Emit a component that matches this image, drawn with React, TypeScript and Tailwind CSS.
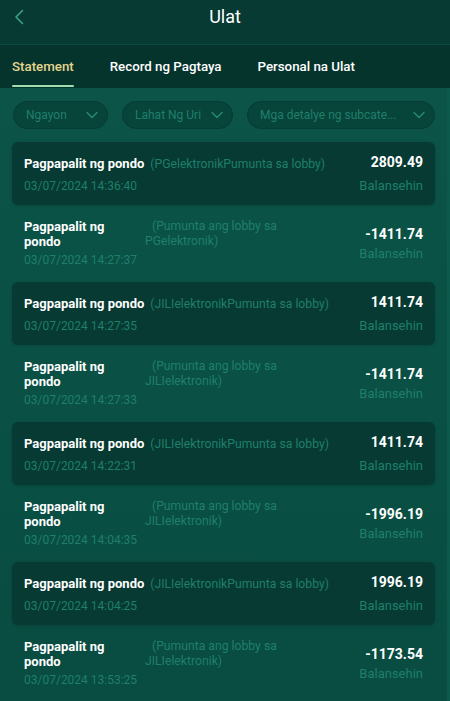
import React from 'react';

type Item = {
  card: boolean;
  desc: string;
  date: string;
  amount: string;
};

const items: Item[] = [
  { card: true, desc: '(PGelektronikPumunta sa lobby)', date: '03/07/2024 14:36:40', amount: '2809.49' },
  { card: false, desc: '(Pumunta ang lobby sa PGelektronik)', date: '03/07/2024 14:27:37', amount: '-1411.74' },
  { card: true, desc: '(JILIelektronikPumunta sa lobby)', date: '03/07/2024 14:27:35', amount: '1411.74' },
  { card: false, desc: '(Pumunta ang lobby sa JILIelektronik)', date: '03/07/2024 14:27:33', amount: '-1411.74' },
  { card: true, desc: '(JILIelektronikPumunta sa lobby)', date: '03/07/2024 14:22:31', amount: '1411.74' },
  { card: false, desc: '(Pumunta ang lobby sa JILIelektronik)', date: '03/07/2024 14:04:35', amount: '-1996.19' },
  { card: true, desc: '(JILIelektronikPumunta sa lobby)', date: '03/07/2024 14:04:25', amount: '1996.19' },
  { card: false, desc: '(Pumunta ang lobby sa JILIelektronik)', date: '03/07/2024 13:53:25', amount: '-1173.54' },
];

function Chevron() {
  return (
    <svg width="12" height="8" viewBox="0 0 12 8" fill="none" className="shrink-0">
      <path d="M1 1.5 L6 6.5 L11 1.5" stroke="#2a8a76" strokeWidth="1.4" strokeLinecap="round" strokeLinejoin="round" />
    </svg>
  );
}

function Filter({ label, width }: { label: string; width: string }) {
  return (
    <div className={`${width} h-[28px] rounded-full bg-[#07443a] border border-[#063b33] flex items-center justify-between pl-[12px] pr-[9px]`}>
      <span className="text-[12px] text-[#1f7f6b] truncate">{label}</span>
      <Chevron />
    </div>
  );
}

function Row({ item }: { item: Item }) {
  if (item.card) {
    return (
      <div className="h-[63px] rounded-[6px] bg-[#063a32] shadow-[0_1px_3px_rgba(0,0,0,0.15)] flex items-center justify-between px-[12px]">
        <div className="flex flex-col">
          <div className="flex items-baseline pt-[2px]">
            <span className="text-[13px] leading-[16px] font-bold text-white whitespace-nowrap">Pagpapalit ng pondo</span>
            <span className="ml-[6px] text-[12.2px] leading-[16px] text-[#1f7f6b] whitespace-nowrap">{item.desc}</span>
          </div>
          <div className="mt-[6px] text-[12px] leading-[16px] text-[#1f7f6b]">{item.date}</div>
        </div>
        <div className="flex flex-col items-end">
          <div className="text-[14px] leading-[16px] font-bold text-white">{item.amount}</div>
          <div className="mt-[8px] text-[13px] leading-[16px] text-[#1f7f6b]">Balansehin</div>
        </div>
      </div>
    );
  }
  return (
    <div className="h-[77px] flex items-center justify-between px-[12px]">
      <div className="flex flex-col">
        <div className="flex items-start">
          <span className="w-[121px] pr-[6px] shrink-0 text-[13px] leading-[15px] font-bold text-white">Pagpapalit ng pondo</span>
          <span className="w-[140px] indent-[7px] text-[12.2px] leading-[15px] text-[#1f7f6b]">{item.desc}</span>
        </div>
        <div className="mt-[3px] text-[12px] leading-[16px] text-[#1f7f6b]">{item.date}</div>
      </div>
      <div className="flex flex-col items-end">
        <div className="text-[14px] leading-[16px] font-bold text-white">{item.amount}</div>
        <div className="mt-[4px] text-[13px] leading-[16px] text-[#1f7f6b]">Balansehin</div>
      </div>
    </div>
  );
}

export default function App() {
  return (
    <div className="w-[450px] h-[701px] overflow-hidden flex flex-col bg-[#0a5044]" style={{ fontFamily: 'Roboto, "Liberation Sans", Arial, sans-serif' }}>
      <header className="h-[45px] shrink-0 bg-[#063a32] border-b border-[#0c4a40] relative">
        <svg width="12" height="16" viewBox="0 0 12 16" fill="none" className="absolute left-[13px] top-[9px]">
          <path d="M9.5 1.5 L3 8 L9.5 14.5" stroke="#3a9f8a" strokeWidth="1.6" strokeLinecap="round" strokeLinejoin="round" />
        </svg>
        <h1 className="pt-[5px] text-center text-[18px] leading-[24px] text-white font-normal">Ulat</h1>
      </header>
      <nav className="h-[43px] shrink-0 bg-[#05342d] flex items-stretch px-[12px] text-[13.3px] font-medium">
        <div className="relative flex items-center text-[#e6d48e]">
          Statement
          <div className="absolute left-0 right-0 bottom-[1px] h-[2px] bg-[#9fdcae] rounded-full" />
        </div>
        <div className="ml-[36px] flex items-center text-white">Record ng Pagtaya</div>
        <div className="ml-[36px] flex items-center text-white">Personal na Ulat</div>
      </nav>
      <main className="flex-1 flex bg-gradient-to-b from-[#0b5447] to-[#094c41]">
        <div className="flex-1 flex flex-col px-[12px] pt-[13px]">
          <div className="flex gap-[14px] pl-[1px]">
            <Filter label="Ngayon" width="w-[95px]" />
            <Filter label="Lahat Ng Uri" width="w-[111px]" />
            <Filter label="Mga detalye ng subcate..." width="w-[188px]" />
          </div>
          <div className="mt-[13px] flex flex-col">
            {items.map((item, i) => (
              <Row key={i} item={item} />
            ))}
          </div>
        </div>
        <div className="w-[6px] bg-[#0c5a4c]" />
      </main>
    </div>
  );
}
